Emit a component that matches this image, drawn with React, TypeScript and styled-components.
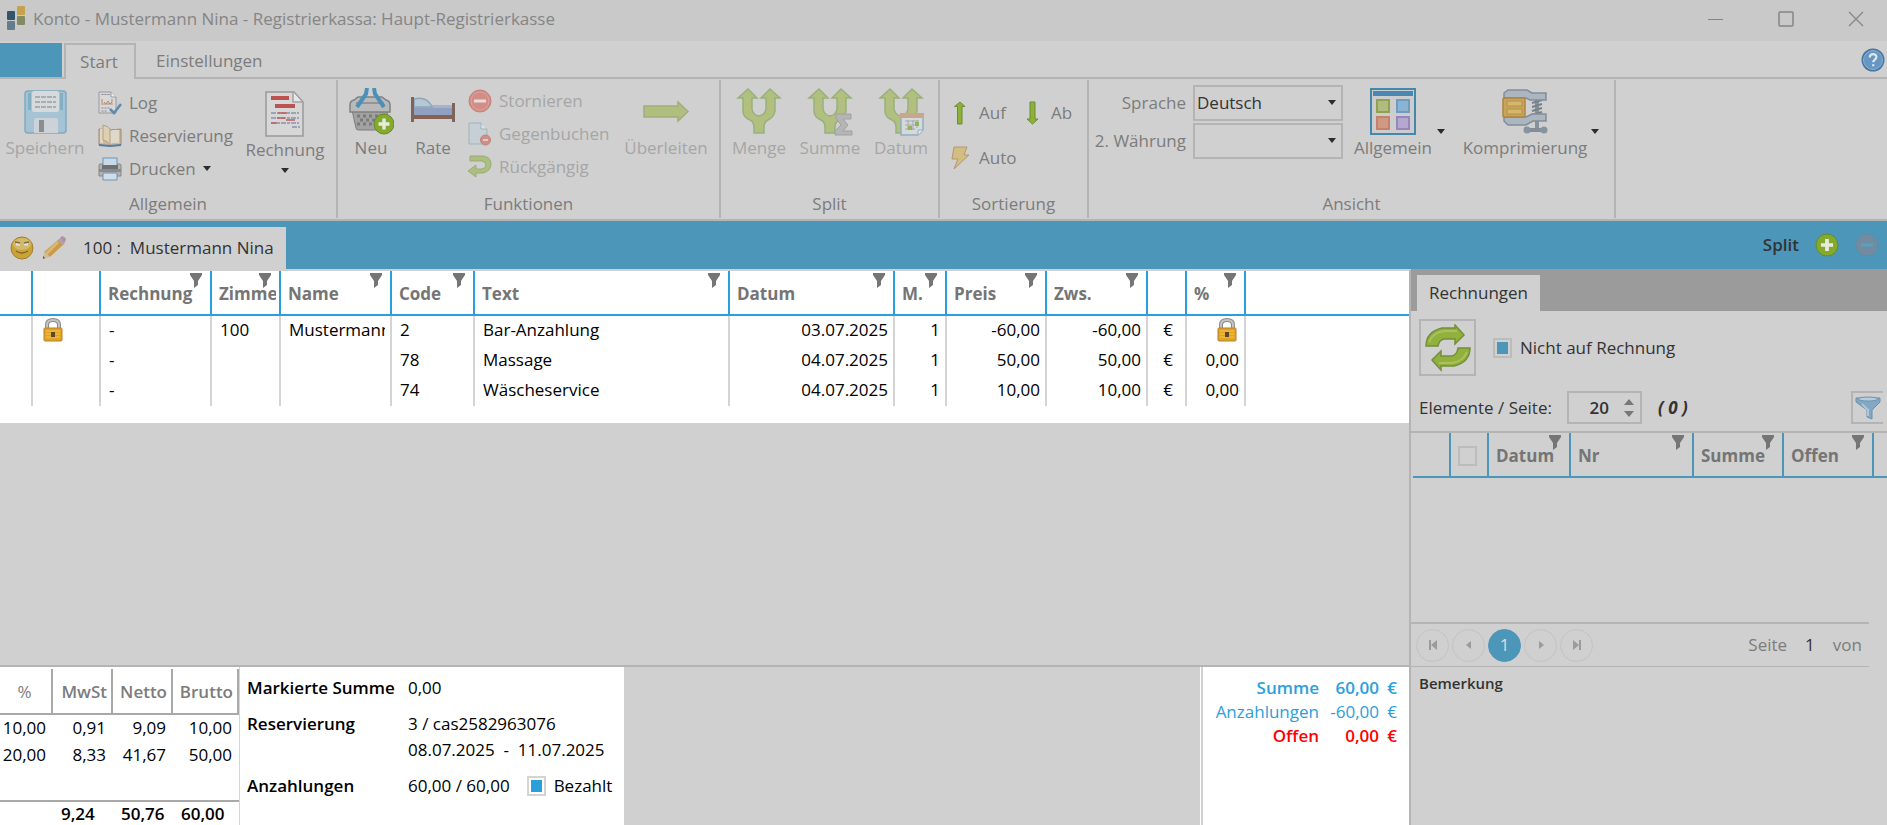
import React from "react";
import styled, { createGlobalStyle, css } from "styled-components";

const c = {
  bar: "#c9c9c9",
  panel: "#d0d0d0",
  line: "#b4b4b4",
  blue: "#4c96ba",
  bright: "#29a0dc",
  muted: "#7c7c7c",
  disabled: "#a6a6a6",
  ink: "#333333",
};

const Global = createGlobalStyle`
  *, *::before, *::after { box-sizing: border-box; }
  html, body, #root { height: 100%; }
  body { margin: 0; background: ${c.panel}; font-family: "Open Sans", "Noto Sans", sans-serif; font-size: 17px; line-height: 24px; }
  button, input, select { font: inherit; color: inherit; margin: 0; }
  button { border: 0; padding: 0; background: none; }
  svg { display: block; flex: none; }
`;

const Page = styled.div`
  display: flex;
  flex-direction: column;
  min-height: 100vh;
  color: ${c.ink};
`;

/* ---------- title bar and ribbon tabs ---------- */

const TitleBar = styled.header`
  display: flex;
  align-items: center;
  height: 41px;
  padding: 0 0 4px 7px;
  background: ${c.bar};
  color: ${c.muted};
`;

const Title = styled.h1`
  flex: 1;
  margin: 0 0 0 7px;
  font-size: 17px;
  font-weight: 400;
  color: #858585;
`;

const WindowButtons = styled.div`
  display: flex;
  gap: 8px;
`;

const WindowButton = styled.button`
  display: flex;
  align-items: center;
  justify-content: center;
  width: 62px;
  height: 36px;
`;

const TabRow = styled.nav`
  display: flex;
  align-items: stretch;
  height: 38px;
  padding-top: 2px;
  border-bottom: 2px solid ${c.line};
`;

const FileTab = styled.button`
  width: 62px;
  background: ${c.blue};
`;

const RibbonTab = styled.button<{ $active?: boolean }>`
  color: ${c.muted};
  padding: 2px 20px 0;
  ${(p) =>
    p.$active &&
    css`
      width: 72px;
      margin: 0 0 -2px 2px;
      padding: 0 2px 0 0;
      border: 2px solid ${c.line};
      border-bottom: 0;
      background: ${c.panel};
    `}
`;

const HelpButton = styled.button`
  margin-left: auto;
  padding: 0 2px 0 0;
`;

/* ---------- ribbon ---------- */

const RibbonBar = styled.div`
  display: flex;
  height: 142px;
  padding: 1px 0;
  border-bottom: 2px solid ${c.line};
  color: ${c.muted};
`;

const Group = styled.section<{ $w: number }>`
  display: flex;
  flex-direction: column;
  flex: none;
  width: ${(p) => p.$w}px;
  border-right: 2px solid ${c.line};
`;

const GroupBody = styled.div<{ $gap?: number; $pad?: number }>`
  display: flex;
  flex: 1;
  gap: ${(p) => p.$gap ?? 8}px;
  padding-left: ${(p) => p.$pad ?? 0}px;
`;

const GroupLabel = styled.h2`
  margin: 0;
  height: 26px;
  font-size: 17px;
  font-weight: 400;
  text-align: center;
`;

const BigButton = styled.button<{ $w: number; $top?: number }>`
  display: flex;
  flex-direction: column;
  align-items: center;
  width: ${(p) => p.$w}px;
  padding-top: ${(p) => p.$top ?? 8}px;
  white-space: nowrap;
  &:disabled {
    color: ${c.disabled};
  }
`;

const MenuButton = styled.button`
  display: flex;
  align-items: flex-start;
  & + & {
    margin-left: 8px;
  }
`;

const MenuFace = styled.span<{ $w: number }>`
  display: flex;
  flex-direction: column;
  align-items: center;
  width: ${(p) => p.$w}px;
  padding-top: 8px;
`;

const SideArrow = styled.span`
  padding: 49px 0 0 2px;
`;

const BelowArrow = styled.span`
  padding-top: 6px;
`;

const SmallList = styled.div<{ $w: number; $top: number }>`
  display: flex;
  flex-direction: column;
  width: ${(p) => p.$w}px;
  padding-top: ${(p) => p.$top}px;
`;

const SmallButton = styled.button`
  display: flex;
  align-items: center;
  gap: 7px;
  height: 33px;
  white-space: nowrap;
  &:disabled {
    color: ${c.disabled};
  }
`;

const SortGrid = styled.div`
  display: grid;
  grid-template-columns: 72px 60px;
  grid-auto-rows: 45px;
  padding-top: 10px;
`;

const SortButton = styled(SmallButton)`
  height: 45px;
`;

const FormGrid = styled.div`
  display: grid;
  grid-template-columns: 97px 150px;
  grid-template-rows: 36px 36px;
  gap: 2px 7px;
  padding-top: 5px;
  align-items: center;
`;

const FormLabel = styled.label`
  text-align: right;
`;

const SelectBox = styled.div`
  position: relative;
  svg {
    position: absolute;
    right: 7px;
    top: 15px;
    pointer-events: none;
  }
`;

const Select = styled.select`
  appearance: none;
  width: 100%;
  height: 36px;
  padding: 0 2px;
  border: 2px solid ${c.line};
  border-radius: 0;
  background: ${c.panel};
  color: ${c.ink};
`;

/* ---------- account band ---------- */

const Band = styled.div`
  display: flex;
  align-items: flex-end;
  justify-content: space-between;
  height: 48px;
  background: ${c.blue};
`;

const AccountTab = styled.div`
  display: flex;
  align-items: center;
  gap: 8px;
  width: 286px;
  height: 42px;
  padding-left: 10px;
  background: ${c.panel};
  white-space: pre;
  button:last-of-type {
    margin-right: 9px;
  }
`;

const SplitTools = styled.div`
  display: flex;
  align-items: center;
  height: 48px;
  padding-right: 8px;
  gap: 16px;
  font-weight: 600;
`;

/* ---------- workspace ---------- */

const Workspace = styled.div`
  display: flex;
  flex: 1;
`;

const Left = styled.main`
  display: flex;
  flex-direction: column;
  flex: 1;
  min-width: 0;
  border-top: 2px solid ${c.panel};
  border-right: 2px solid ${c.line};
`;

const GridArea = styled.div`
  flex: 1;
`;

const BookingWrap = styled.div`
  padding-bottom: 17px;
  background: #fff;
  color: #000;
`;

const DataTable = styled.table`
  width: 100%;
  table-layout: fixed;
  border-collapse: separate;
  border-spacing: 0;
`;

const Th = styled.th<{ $line: string }>`
  position: relative;
  height: 45px;
  padding: 2px 3px 0 7px;
  border-right: 2px solid ${(p) => p.$line};
  border-bottom: 2px solid ${(p) => p.$line};
  color: #757575;
  font-weight: 700;
  text-align: left;
  &:last-child {
    border-right: 0;
  }
`;

const Clip = styled.div`
  overflow: hidden;
  white-space: nowrap;
`;

const FilterMark = styled.svg`
  position: absolute;
  top: 2px;
  right: 8px;
`;

const Td = styled.td<{ $align?: "right" | "center" }>`
  height: 30px;
  padding: 0 5px 2px 8px;
  border-right: 2px solid #d4d4d4;
  text-align: ${(p) => p.$align ?? "left"};
  &:last-child {
    border-right: 0;
  }
`;

const LockSlot = styled.div<{ $end?: boolean }>`
  display: flex;
  justify-content: ${(p) => (p.$end ? "flex-end" : "flex-start")};
  padding: 0 2px;
`;

/* ---------- bottom summary ---------- */

const Summary = styled.div`
  display: flex;
  height: 160px;
  border-top: 2px solid ${c.line};
  color: #000;
`;

const TaxBox = styled.div`
  display: flex;
  width: 240px;
  padding-top: 2px;
  background: #fff;
  border-right: 1px solid #d4d4d4;
`;

const TaxTable = styled.table`
  width: 239px;
  height: 156px;
  table-layout: fixed;
  border-collapse: separate;
  border-spacing: 0;
  th {
    height: 46px;
    padding: 2px 4px 0 0;
    border-right: 2px solid #a9a9a9;
    border-bottom: 2px solid #a9a9a9;
    color: ${c.muted};
    font-weight: 600;
    text-align: right;
  }
  th:first-child {
    padding: 2px 2px 0 0;
    font-weight: 400;
    text-align: center;
  }
  tbody td {
    height: 27px;
    padding: 0 7px 2px 0;
    text-align: right;
  }
  tbody tr:last-child td {
    height: 58px;
    padding-bottom: 32px;
  }
  tfoot td {
    padding: 0 0 2px 8px;
    border-top: 2px solid #a9a9a9;
    font-weight: 600;
  }
`;

const StayBox = styled.dl`
  display: grid;
  grid-template-columns: 161px 1fr;
  grid-template-rows: 36px 36px 26px 36px;
  align-content: start;
  width: 384px;
  margin: 0;
  padding: 3px 0 0 7px;
  background: #fff;
  line-height: 36px;
  dt {
    font-weight: 600;
    white-space: nowrap;
  }
  dd {
    margin: 0;
    white-space: pre;
  }
`;

const StayDates = styled.dd`
  grid-column: 2;
  line-height: 16px;
`;

const PaidCell = styled.dd`
  display: flex;
  align-items: center;
  gap: 17px;
`;

const TotalBox = styled.div`
  width: 208px;
  margin-left: auto;
  padding: 9px 12px 0 0;
  background: #fff;
  border-left: 2px solid ${c.panel};
  box-shadow: -1px 0 #fff;
`;

const TotalTable = styled.table`
  width: 100%;
  border-collapse: collapse;
  td,
  th {
    height: 24px;
    padding: 0;
    font-weight: inherit;
    text-align: right;
  }
  td:nth-child(2) {
    width: 60px;
  }
  td:last-child {
    width: 18px;
  }
`;

const TotalRow = styled.tr<{ $color: string; $strong?: boolean }>`
  color: ${(p) => p.$color};
  font-weight: ${(p) => (p.$strong ? 600 : 400)};
`;

/* ---------- invoice side panel ---------- */

const Side = styled.aside`
  display: flex;
  flex-direction: column;
  flex: none;
  width: 476px;
`;

const SideTabs = styled.div`
  display: flex;
  align-items: flex-end;
  height: 42px;
  padding-left: 6px;
  background: #9b9b9b;
`;

const SideTab = styled.button`
  width: 123px;
  height: 36px;
  background: ${c.panel};
`;

const RefreshRow = styled.div`
  display: flex;
  align-items: center;
  gap: 17px;
  padding: 8px 8px 0;
`;

const RefreshButton = styled.button`
  display: flex;
  align-items: center;
  justify-content: center;
  width: 57px;
  height: 57px;
  border: 2px solid ${c.line};
`;

const CheckLabel = styled.label`
  display: flex;
  align-items: center;
  gap: 8px;
`;

const Check = styled.input<{ $fill?: string }>`
  appearance: none;
  display: block;
  flex: none;
  width: 19px;
  height: 20px;
  border: 2px solid ${(p) => (p.$fill === c.bright ? "#d4d4d4" : "#bcbcbc")};
  padding: 2px;
  &:checked {
    background: ${(p) => p.$fill} content-box;
  }
`;

const PagingRow = styled.div`
  display: flex;
  align-items: center;
  height: 57px;
  padding: 8px 4px 0 8px;
  border-bottom: 2px solid ${c.line};
`;

const SpinLabel = styled.label`
  width: 148px;
`;

const SpinBox = styled.div`
  display: flex;
  align-items: center;
  width: 75px;
  height: 33px;
  border: 2px solid ${c.line};
`;

const SpinInput = styled.input`
  width: 52px;
  padding: 0 12px 0 0;
  border: 0;
  background: none;
  font-weight: 600;
  text-align: right;
  appearance: textfield;
  &::-webkit-inner-spin-button {
    appearance: none;
  }
`;

const SpinArrows = styled.div`
  display: flex;
  flex-direction: column;
  gap: 6px;
  padding-left: 3px;
`;

const Count = styled.em`
  margin-left: 16px;
  font-weight: 700;
`;

const FilterButton = styled.button`
  display: flex;
  align-items: center;
  justify-content: center;
  width: 32px;
  height: 33px;
  margin-left: auto;
  border: 2px solid ${c.line};
  border-right: 0;
`;

const InvoiceArea = styled.div`
  flex: 1;
  padding-left: 2px;
`;

const Pager = styled.div`
  display: flex;
  align-items: center;
  gap: 3px;
  height: 45px;
  margin-right: 18px;
  padding: 0 7px 0 5px;
  border-top: 2px solid ${c.line};
  border-bottom: 1px solid ${c.line};
  color: ${c.muted};
`;

const PageButton = styled.button<{ $current?: boolean }>`
  display: flex;
  align-items: center;
  justify-content: center;
  width: 33px;
  height: 33px;
  border: 1px solid #c3c3c3;
  border-radius: 50%;
  ${(p) =>
    p.$current &&
    css`
      border-color: ${c.blue};
      background: ${c.blue};
      color: #dedede;
    `}
`;

const PageInfo = styled.div`
  display: flex;
  gap: 18px;
  margin-left: auto;
  b {
    color: ${c.ink};
    font-weight: 400;
  }
`;

const Remark = styled.h3`
  height: 158px;
  margin: 0;
  padding: 4px 8px;
  font-size: 15px;
  font-weight: 600;
`;

/* ---------- drawings ---------- */

const Caret = () => (
  <svg width="8" height="5" viewBox="0 0 8 5">
    <path d="M0 0h8L4 5z" fill="#2c2c2c" />
  </svg>
);

const Logo = () => (
  <svg width="19" height="25" viewBox="0 0 19 25">
    <rect x="0" y="5" width="8" height="9" rx="1" fill="#34556b" />
    <rect x="10" y="0" width="8" height="9" rx="1" fill="#c5a24e" />
    <rect x="10" y="10" width="8" height="9" rx="1" fill="#838c61" />
    <rect x="0" y="15" width="8" height="9" rx="1" fill="#637c8e" />
  </svg>
);

const HelpIcon = () => (
  <svg width="24" height="24" viewBox="0 0 24 24">
    <circle cx="12" cy="12" r="11.5" fill="#4674a5" />
    <circle cx="12" cy="12" r="9.5" fill="#6597c0" stroke="#8fb3cf" />
    <path d="M8.8 9.4c0-4.4 6.6-4.2 6.6-.4 0 2.500-3.200 2.600-3.200 5.200M12.200 16.200v2" fill="none" stroke="#dfe6ec" strokeWidth="2.200" />
  </svg>
);

const FloppyIcon = () => (
  <svg width="46" height="48" viewBox="0 0 46 48">
    <rect x="3" y="3" width="41" height="42" rx="3" fill="#a5c3d3" stroke="#7eabc3" strokeWidth="1.500" />
    <path d="M6 5h3v17H6zM38 5h3v17h-3z" fill="#83afc6" />
    <rect x="10" y="3" width="27" height="21" rx="2" fill="#d7dadd" />
    <path d="M13 9h21M13 14h21M13 19h21" stroke="#a9adb2" strokeWidth="2" strokeDasharray="5 1" />
    <path d="M12 45V32q0-2 2-2h20q2 0 2 2v13z" fill="#ccd2d7" />
    <rect x="17" y="32" width="5" height="12" fill="#8b8e90" />
  </svg>
);

const LogIcon = () => (
  <svg width="24" height="24" viewBox="0 0 24 24">
    <path d="M1 1h12l5 5v16H1z" fill="#d8d8d8" stroke="#9a9a9a" />
    <path d="M13 1v5h5" fill="#eee" stroke="#9a9a9a" />
    <path d="M3.500 3.500h8M3.500 17h9M3.500 20h6" stroke="#7f8796" strokeDasharray="2 1" />
    <path d="M4 8v6M5 13h10M6 11l2 2 2-3 2 3 2-2v-3" stroke="#b98a6c" fill="none" />
    <path d="M12 18l4 4 7-9" fill="none" stroke="#6489ae" strokeWidth="2.600" />
  </svg>
);

const BookIcon = () => (
  <svg width="24" height="24" viewBox="0 0 24 24">
    <path d="M1 5l10 1 12-1v16l-11 1-11-1z" fill="#c9b99a" stroke="#9c8a6e" />
    <path d="M1 21l11 1 11-1" fill="none" stroke="#557da6" strokeWidth="2" />
    <path d="M2 5h3v14H2z" fill="#e0d6c2" />
    <path d="M12 7q4-2 9-1v13q-5-1-9 1z" fill="#dfd8c8" />
    <path d="M5 1q5 1 7 4v16q-2-4-7-5z" fill="#dccfb4" stroke="#b5a17c" />
  </svg>
);

const PrinterIcon = () => (
  <svg width="24" height="24" viewBox="0 0 24 24">
    <path d="M1 8q0-1 2-1h18q2 0 2 1v11H1z" fill="#b3b3b3" stroke="#858585" />
    <rect x="5" y="1" width="14" height="8" fill="#c8dae8" stroke="#6c93b5" />
    <rect x="4" y="8" width="16" height="7" fill="#707070" />
    <rect x="1" y="12" width="22" height="3" fill="#8b8b8b" />
    <path d="M5 16h14v7H5z" fill="#cfdee9" stroke="#6c93b5" />
  </svg>
);

const InvoiceIcon = () => (
  <svg width="46" height="48" viewBox="0 0 46 48">
    <path d="M4 2h28l9 10v34H4z" fill="#d7d7d7" stroke="#999" strokeWidth="1.500" />
    <path d="M31 2v10h9" fill="#e6e6e6" stroke="#a3a3a3" strokeWidth="1.500" />
    <path d="M9 8h18M13 16h20" stroke="#bd5350" strokeWidth="4" />
    <path d="M9 23h28M9 28h28M9 33h28M30 37h8" stroke="#8795ad" strokeWidth="1.500" strokeDasharray="5 1 3 1" />
    <path d="M16 23h9M15 28h8M24 30h9M9 33h6" stroke="#bd625f" strokeWidth="1.500" />
  </svg>
);

const Plus = ({ cx, cy, r }: { cx: number; cy: number; r: number }) => (
  <g>
    <circle cx={cx} cy={cy} r={r} fill="#83a92d" stroke="#668b2e" />
    <path d={`M${cx - r * 0.55} ${cy}h${r * 1.1}M${cx} ${cy - r * 0.55}v${r * 1.1}`} stroke="#e7ebdf" strokeWidth={r * 0.34} />
  </g>
);

const BasketIcon = () => (
  <svg width="46" height="48" viewBox="0 0 46 48">
    <path d="M4 22h36l-4 18q0 2-3 2H11q-3 0-3-2z" fill="#a2a2a2" stroke="#7c7c7c" />
    <path d="M2 17q0-4 4-5l4-3h24l4 3q4 1 4 5v7H2z" fill="#b9b9b9" stroke="#808080" strokeWidth="1.500" />
    <path d="M8 15h28" stroke="#959595" strokeWidth="2" />
    <path d="M9 28h25M9 36h25" stroke="#7b7b7b" strokeWidth="3" strokeDasharray="3 3" />
    <path d="M12 32h22" stroke="#7b7b7b" strokeWidth="3" strokeDasharray="3 3" />
    <path d="M19 0l-1 6-9 13M26 0l1 6 9 13" fill="none" stroke="#4b90b9" strokeWidth="4" />
    <Plus cx={36} cy={36} r={10} />
  </svg>
);

const BedIcon = () => (
  <svg width="46" height="48" viewBox="0 0 46 48">
    <path d="M4 18h38v9H4z" fill="#8fa0c0" />
    <path d="M4 17h38v3H4z" fill="#a6b3cb" />
    <path d="M4 11q13-3 18 8H4z" fill="#b6c8d4" stroke="#8ba5b9" strokeWidth="1.500" />
    <path d="M2 27h42v4H2z" fill="#856156" />
    <path d="M1 9h3v25H1zM42 15h3v19h-3z" fill="#7d655b" />
  </svg>
);

const CancelIcon = () => (
  <svg width="24" height="24" viewBox="0 0 24 24">
    <circle cx="12" cy="12" r="11" fill="#d18d86" stroke="#c5827c" />
    <circle cx="12" cy="12" r="9" fill="none" stroke="#dba39c" />
    <path d="M6 12h12" stroke="#e4dddb" strokeWidth="3" />
  </svg>
);

const CounterIcon = () => (
  <svg width="24" height="24" viewBox="0 0 24 24">
    <path d="M1 1h12l6 6v15H1z" fill="#c6cfd3" stroke="#9db5c1" />
    <path d="M13 1v6h6" fill="#dce2e5" stroke="#9db5c1" />
    <circle cx="17.500" cy="18" r="5" fill="#cc8f8a" stroke="#c37f79" />
    <path d="M15 18h5" stroke="#e4dddb" strokeWidth="1.500" />
  </svg>
);

const UndoIcon = () => (
  <svg width="24" height="24" viewBox="0 0 24 24">
    <path d="M2 1h13q8 1 8 8t-8 9H8v4L0 16l8-6v4h6q4-1 4-4t-4-4H2z" fill="#adbf7e" stroke="#98ac76" />
  </svg>
);

const TransferIcon = () => (
  <svg width="46" height="48" viewBox="0 0 46 48">
    <path d="M1 18h34v-4l10 9.500-10 9.500v-4H1z" fill="#b1be7f" stroke="#9bb07b" strokeWidth="1.500" />
  </svg>
);

const ForkShape = () => (
  <path
    d="M12 1l9 9h-5v11q1 6 7 7 6-1 7-7V10h-5l9-9 10 9h-5v13q-1 6-7 9-4 2-4 7v6H18v-6q0-5-4-7-7-3-7-9V10H2z"
    fill="#b1c07f"
    stroke="#99b07e"
    strokeWidth="1.500"
  />
);

const ForkIcon = ({ mark }: { mark?: "sum" | "date" }) => (
  <svg width="46" height="48" viewBox="0 0 46 48">
    <ForkShape />
    {mark === "sum" && (
      <path d="M29 26h15v5h-8l5 6-5 6h9v4H28v-4l6-6-5-7z" fill="#b5b5b5" stroke="#a0a0a0" />
    )}
    {mark === "date" && (
      <g>
        <path d="M23 28h22v14l-5 5H23z" fill="#d4d9dc" stroke="#8fb0c3" strokeWidth="1.500" />
        <path d="M22 25h24v5H22z" fill="#c9a78f" />
        <path d="M27 33h14M27 37h14M27 41h10M30 32v10M35 32v10M39 32v8" stroke="#a9a9a9" />
        <path d="M30 38h4v4h-4zM37 34h4v4h-4z" fill="#93b25a" />
        <path d="M40 47v-5h5" fill="#e4e4e4" stroke="#8fb0c3" />
      </g>
    )}
  </svg>
);

const SortArrow = ({ down }: { down?: boolean }) => (
  <svg width="24" height="24" viewBox="0 0 24 24">
    <path
      d={down ? "M10 1h5v17h3l-5.500 5L7 18h3z" : "M12 1l5 4.500h-3V23H9.500V5.500h-3z"}
      fill="#8db137"
      stroke="#6b8d34"
    />
  </svg>
);

const BoltIcon = () => (
  <svg width="24" height="24" viewBox="0 0 24 24">
    <path d="M6 1h13l-3 8h5L6 23l4-10H4z" fill="#d1be80" stroke="#b6976f" />
  </svg>
);

const TilesIcon = () => (
  <svg width="46" height="48" viewBox="0 0 46 48">
    <rect x="1" y="1" width="44" height="45" fill="#cdcdcd" stroke="#4389ae" strokeWidth="2" />
    <path d="M3 3h40v5H3z" fill="#4a87b2" />
    <rect x="7" y="12" width="12" height="12" fill="#b0bb80" stroke="#8ea352" strokeWidth="2" />
    <rect x="27" y="12" width="12" height="12" fill="#8bb3d3" stroke="#6e9cc0" strokeWidth="2" />
    <rect x="7" y="29" width="12" height="12" fill="#cf9a82" stroke="#c6806b" strokeWidth="2" />
    <rect x="27" y="29" width="12" height="12" fill="#b5a8cf" stroke="#9686bd" strokeWidth="2" />
  </svg>
);

const ClampIcon = () => (
  <svg width="46" height="48" viewBox="0 0 46 48">
    <path d="M35 9v32" stroke="#87919a" strokeWidth="4" />
    <path d="M30 15l10-3M30 19l10-3M30 23l10-3M30 27l10-3" stroke="#77818b" strokeWidth="2" />
    <path d="M2 5l4-3h19l5 3h14v7H28l-4-2H2z" fill="#abb6c0" stroke="#828d98" strokeWidth="1.500" />
    <path d="M2 29h22l6-3h14v7H31l-7 4H6l-4-4z" fill="#abb6c0" stroke="#828d98" strokeWidth="1.500" />
    <rect x="1" y="10" width="22" height="19" rx="1" fill="#c9a55c" stroke="#ad8442" strokeWidth="1.500" />
    <rect x="5" y="13" width="15" height="5" fill="#d3b76c" stroke="#b78f45" />
    <rect x="5" y="21" width="15" height="5" fill="#d3b76c" stroke="#b78f45" />
    <path d="M25 42h19" stroke="#828d98" strokeWidth="4" />
    <circle cx="25" cy="42" r="3.500" fill="#8794a0" />
    <circle cx="42" cy="42" r="3.500" fill="#8794a0" />
  </svg>
);

const SmileyIcon = () => (
  <svg width="24" height="24" viewBox="0 0 24 24">
    <circle cx="12" cy="12" r="11" fill="#c9a336" stroke="#a37e31" />
    <ellipse cx="12" cy="8" rx="9" ry="6" fill="#d3ba6a" />
    <path d="M6 8h4M14 8h4" stroke="#e2e2e2" strokeWidth="3" />
    <path d="M5 6l5 1M14 7l5-1" stroke="#7d6a3c" strokeWidth="1.500" />
    <path d="M6 15q6 4 12 0" fill="none" stroke="#80652a" strokeWidth="1.500" />
  </svg>
);

const PencilIcon = () => (
  <svg width="24" height="24" viewBox="0 0 24 24">
    <path d="M17 3l5 5L8 21l-6-5z" fill="#cc9a4b" />
    <path d="M15 5l2 2L5 19l-2-2z" fill="#d9b972" />
    <path d="M2 16l6 5-7 2z" fill="#cfbd9f" />
    <path d="M1 20l2 2-2 1z" fill="#555" />
    <path d="M16 4l2-2 5 5-2 2z" fill="#a9a9a9" />
    <path d="M18 2l2-2q4 1 4 4l-2 3z" fill="#b48fac" />
  </svg>
);

const RoundPlus = () => (
  <svg width="24" height="24" viewBox="0 0 24 24">
    <Plus cx={12} cy={12} r={11} />
  </svg>
);

const RoundMinus = () => (
  <svg width="24" height="24" viewBox="0 0 24 24">
    <circle cx="12" cy="12" r="11" fill="#718c9f" stroke="#668ba3" />
    <path d="M6 12h12" stroke="#5b9fc2" strokeWidth="3" />
  </svg>
);

const LockIcon = () => (
  <svg width="20" height="24" viewBox="0 0 20 24">
    <path d="M4 11V7q0-5 6-5t6 5v4" fill="none" stroke="#8b8b8b" strokeWidth="4" />
    <path d="M4 11V7q0-5 6-5t6 5v4" fill="none" stroke="#c5c5c5" strokeWidth="2" />
    <rect x="1" y="10" width="18" height="13" rx="1" fill="#e2a325" stroke="#b98029" />
    <path d="M3 13h14M3 16h14M3 19h14" stroke="#f3c850" />
    <path d="M8 14h4v5H8z" fill="#5b4820" />
  </svg>
);

const RefreshIcon = () => (
  <svg width="48" height="48" viewBox="0 0 48 48">
    <path d="M2 22q0-14 16-18h13V1l9 10-9 9v-5H20q-5 1-6 7z" fill="#92b13c" stroke="#728f3a" strokeWidth="1.500" />
    <path d="M46 24q0 14-16 18H17v4L8 36l9-9v5h11q5-1 6-8z" fill="#92b13c" stroke="#728f3a" strokeWidth="1.500" />
    <path d="M5 18q4-10 16-11h12M43 28q-4 10-16 11H15" fill="none" stroke="#a9c25e" strokeWidth="2" />
  </svg>
);

const FunnelIcon = () => (
  <svg width="26" height="26" viewBox="0 0 26 26">
    <path d="M1 3h24v4l-8 8v9l-5-2v-7L1 7z" fill="#83a8c4" stroke="#6a91ae" />
    <ellipse cx="13" cy="4" rx="10" ry="2" fill="#b9ccd9" stroke="#6d95b2" />
    <path d="M7 9l6 6v6" fill="none" stroke="#aec6d8" strokeWidth="2" />
  </svg>
);

const Filter = () => (
  <FilterMark width="12" height="15" viewBox="0 0 12 15">
    <path d="M0 0h12v2L8 8v4l-4 3V8L0 2z" fill="#757575" />
  </FilterMark>
);

const PageGlyph = ({ d }: { d: string }) => (
  <svg width="10" height="10" viewBox="0 0 10 10">
    <path d={d} fill="#9b9b9b" />
  </svg>
);

/* ---------- data ---------- */

const bookingColumns: { title: string; width: number; filter?: boolean }[] = [
  { title: "", width: 33 },
  { title: "", width: 68 },
  { title: "Rechnung", width: 111, filter: true },
  { title: "Zimmer", width: 69, filter: true },
  { title: "Name", width: 111, filter: true },
  { title: "Code", width: 83, filter: true },
  { title: "Text", width: 255, filter: true },
  { title: "Datum", width: 165, filter: true },
  { title: "M.", width: 52, filter: true },
  { title: "Preis", width: 100, filter: true },
  { title: "Zws.", width: 101, filter: true },
  { title: "", width: 39 },
  { title: "%", width: 59, filter: true },
];

const bookings = [
  { locked: true, room: "100", name: "Mustermann", code: "2", text: "Bar-Anzahlung", date: "03.07.2025", price: "-60,00" },
  { locked: false, room: "", name: "", code: "78", text: "Massage", date: "04.07.2025", price: "50,00" },
  { locked: false, room: "", name: "", code: "74", text: "Wäscheservice", date: "04.07.2025", price: "10,00" },
];

const invoiceColumns = [
  { title: "Datum", width: 82 },
  { title: "Nr", width: 123 },
  { title: "Summe", width: 90 },
  { title: "Offen", width: 90 },
];

const taxes = [
  ["10,00", "0,91", "9,09", "10,00"],
  ["20,00", "8,33", "41,67", "50,00"],
];

/* ---------- sections ---------- */

const Ribbon = () => (
  <RibbonBar>
    <Group $w={338}>
      <GroupBody>
        <BigButton $w={90} disabled><FloppyIcon />Speichern</BigButton>
        <SmallList $w={142} $top={6}>
          <SmallButton><LogIcon />Log</SmallButton>
          <SmallButton><BookIcon />Reservierung</SmallButton>
          <SmallButton><PrinterIcon />Drucken<Caret /></SmallButton>
        </SmallList>
        <BigButton $w={74} $top={10}>
          <InvoiceIcon />Rechnung
          <BelowArrow><Caret /></BelowArrow>
        </BigButton>
      </GroupBody>
      <GroupLabel>Allgemein</GroupLabel>
    </Group>
    <Group $w={383}>
      <GroupBody $pad={6}>
        <BigButton $w={54}><BasketIcon />Neu</BigButton>
        <BigButton $w={54}><BedIcon />Rate</BigButton>
        <SmallList $w={145} $top={4}>
          <SmallButton disabled><CancelIcon />Stornieren</SmallButton>
          <SmallButton disabled><CounterIcon />Gegenbuchen</SmallButton>
          <SmallButton disabled><UndoIcon />Rückgängig</SmallButton>
        </SmallList>
        <BigButton $w={90} disabled><TransferIcon />Überleiten</BigButton>
      </GroupBody>
      <GroupLabel>Funktionen</GroupLabel>
    </Group>
    <Group $w={219}>
      <GroupBody $pad={6} $gap={7}>
        <BigButton $w={64} disabled><ForkIcon />Menge</BigButton>
        <BigButton $w={64} disabled><ForkIcon mark="sum" />Summe</BigButton>
        <BigButton $w={64} disabled><ForkIcon mark="date" />Datum</BigButton>
      </GroupBody>
      <GroupLabel>Split</GroupLabel>
    </Group>
    <Group $w={149}>
      <GroupBody $pad={8}>
        <SortGrid>
          <SortButton><SortArrow />Auf</SortButton>
          <SortButton><SortArrow down />Ab</SortButton>
          <SortButton><BoltIcon />Auto</SortButton>
        </SortGrid>
      </GroupBody>
      <GroupLabel>Sortierung</GroupLabel>
    </Group>
    <Group $w={527}>
      <GroupBody>
        <FormGrid>
          <FormLabel htmlFor="language">Sprache</FormLabel>
          <SelectBox>
            <Select id="language" defaultValue="Deutsch"><option>Deutsch</option></Select>
            <Caret />
          </SelectBox>
          <FormLabel htmlFor="currency">2. Währung</FormLabel>
          <SelectBox>
            <Select id="currency" defaultValue=""><option value="" /></Select>
            <Caret />
          </SelectBox>
        </FormGrid>
        <MenuButton>
          <MenuFace $w={84}><TilesIcon />Allgemein</MenuFace>
          <SideArrow><Caret /></SideArrow>
        </MenuButton>
        <MenuButton>
          <MenuFace $w={128}><ClampIcon />Komprimierung</MenuFace>
          <SideArrow><Caret /></SideArrow>
        </MenuButton>
      </GroupBody>
      <GroupLabel>Ansicht</GroupLabel>
    </Group>
  </RibbonBar>
);

const Bookings = () => (
  <BookingWrap>
    <DataTable>
      <colgroup>
        {bookingColumns.map((col, i) => <col key={i} width={col.width} />)}
        <col />
      </colgroup>
      <thead>
        <tr>
          {bookingColumns.map((col, i) => (
            <Th key={i} $line={c.bright}>
              <Clip>{col.title}</Clip>
              {col.filter && <Filter />}
            </Th>
          ))}
          <Th $line={c.bright} />
        </tr>
      </thead>
      <tbody>
        {bookings.map((b) => (
          <tr key={b.code}>
            <Td />
            <Td>{b.locked && <LockSlot><LockIcon /></LockSlot>}</Td>
            <Td>-</Td>
            <Td>{b.room}</Td>
            <Td><Clip>{b.name}</Clip></Td>
            <Td>{b.code}</Td>
            <Td>{b.text}</Td>
            <Td $align="right">{b.date}</Td>
            <Td $align="right">1</Td>
            <Td $align="right">{b.price}</Td>
            <Td $align="right">{b.price}</Td>
            <Td $align="center">€</Td>
            <Td $align="right">{b.locked ? <LockSlot $end><LockIcon /></LockSlot> : "0,00"}</Td>
            <Td />
          </tr>
        ))}
      </tbody>
    </DataTable>
  </BookingWrap>
);

const BottomSummary = () => (
  <Summary>
    <TaxBox>
      <TaxTable>
        <colgroup>
          <col width={53} />
          <col width={60} />
          <col width={60} />
          <col width={66} />
        </colgroup>
        <thead>
          <tr><th>%</th><th>MwSt</th><th>Netto</th><th>Brutto</th></tr>
        </thead>
        <tbody>
          {taxes.map((row) => (
            <tr key={row[0]}>{row.map((v, i) => <td key={i}>{v}</td>)}</tr>
          ))}
        </tbody>
        <tfoot>
          <tr><td /><td>9,24</td><td>50,76</td><td>60,00</td></tr>
        </tfoot>
      </TaxTable>
    </TaxBox>
    <StayBox>
      <dt>Markierte Summe</dt>
      <dd>0,00</dd>
      <dt>Reservierung</dt>
      <dd>3 / cas2582963076</dd>
      <StayDates>{"08.07.2025  -  11.07.2025"}</StayDates>
      <dt>Anzahlungen</dt>
      <PaidCell>
        60,00 / 60,00
        <CheckLabel><Check type="checkbox" defaultChecked $fill={c.bright} />Bezahlt</CheckLabel>
      </PaidCell>
    </StayBox>
    <TotalBox>
      <TotalTable>
        <tbody>
          <TotalRow $color={c.bright} $strong><th scope="row">Summe</th><td>60,00</td><td>€</td></TotalRow>
          <TotalRow $color={c.bright}><th scope="row">Anzahlungen</th><td>-60,00</td><td>€</td></TotalRow>
          <TotalRow $color="#ff0000" $strong><th scope="row">Offen</th><td>0,00</td><td>€</td></TotalRow>
        </tbody>
      </TotalTable>
    </TotalBox>
  </Summary>
);

const Invoices = () => (
  <Side>
    <SideTabs><SideTab>Rechnungen</SideTab></SideTabs>
    <RefreshRow>
      <RefreshButton aria-label="Aktualisieren"><RefreshIcon /></RefreshButton>
      <CheckLabel><Check type="checkbox" defaultChecked $fill={c.blue} />Nicht auf Rechnung</CheckLabel>
    </RefreshRow>
    <PagingRow>
      <SpinLabel htmlFor="per-page">Elemente / Seite:</SpinLabel>
      <SpinBox>
        <SpinInput id="per-page" type="number" defaultValue={20} />
        <SpinArrows>
          <button aria-label="Mehr"><svg width="10" height="6"><path d="M0 6h10L5 0z" fill="#777" /></svg></button>
          <button aria-label="Weniger"><svg width="10" height="6"><path d="M0 0h10L5 6z" fill="#777" /></svg></button>
        </SpinArrows>
      </SpinBox>
      <Count>( 0 )</Count>
      <FilterButton aria-label="Filter"><FunnelIcon /></FilterButton>
    </PagingRow>
    <InvoiceArea>
      <DataTable>
        <colgroup>
          <col width={38} />
          <col width={38} />
          {invoiceColumns.map((col) => <col key={col.title} width={col.width} />)}
          <col />
        </colgroup>
        <thead>
          <tr>
            <Th $line={c.blue} />
            <Th $line={c.blue}><Check type="checkbox" aria-label="Alle auswählen" /></Th>
            {invoiceColumns.map((col) => (
              <Th key={col.title} $line={c.blue}><Clip>{col.title}</Clip><Filter /></Th>
            ))}
            <Th $line={c.blue} />
          </tr>
        </thead>
      </DataTable>
    </InvoiceArea>
    <Pager>
      <PageButton aria-label="Erste Seite"><PageGlyph d="M1 0h2v10H1zM9 0v10L3 5z" /></PageButton>
      <PageButton aria-label="Vorige Seite"><PageGlyph d="M7 1v8L2 5z" /></PageButton>
      <PageButton $current>1</PageButton>
      <PageButton aria-label="Nächste Seite"><PageGlyph d="M3 1v8l5-4z" /></PageButton>
      <PageButton aria-label="Letzte Seite"><PageGlyph d="M7 0h2v10H7zM1 0v10l6-5z" /></PageButton>
      <PageInfo>Seite<b>1</b>von</PageInfo>
    </Pager>
    <Remark>Bemerkung</Remark>
  </Side>
);

export default function App() {
  return (
    <Page>
      <Global />
      <TitleBar>
        <Logo />
        <Title>Konto - Mustermann Nina - Registrierkassa: Haupt-Registrierkasse</Title>
        <WindowButtons>
          <WindowButton aria-label="Minimieren">
            <svg width="16" height="16"><path d="M0 8.500h15" stroke="#858585" /></svg>
          </WindowButton>
          <WindowButton aria-label="Maximieren">
            <svg width="16" height="16"><rect x="1" y="1" width="14" height="14" rx="1" fill="none" stroke="#858585" strokeWidth="1.500" /></svg>
          </WindowButton>
          <WindowButton aria-label="Schließen">
            <svg width="16" height="16"><path d="M1 1l14 14M15 1L1 15" stroke="#858585" strokeWidth="1.300" /></svg>
          </WindowButton>
        </WindowButtons>
      </TitleBar>
      <TabRow>
        <FileTab aria-label="Datei" />
        <RibbonTab $active>Start</RibbonTab>
        <RibbonTab>Einstellungen</RibbonTab>
        <HelpButton aria-label="Hilfe"><HelpIcon /></HelpButton>
      </TabRow>
      <Ribbon />
      <Band>
        <AccountTab>
          <button aria-label="Gast"><SmileyIcon /></button>
          <button aria-label="Bearbeiten"><PencilIcon /></button>
          {"100 :  Mustermann Nina"}
        </AccountTab>
        <SplitTools>
          Split
          <button aria-label="Split hinzufügen"><RoundPlus /></button>
          <button aria-label="Split entfernen" disabled><RoundMinus /></button>
        </SplitTools>
      </Band>
      <Workspace>
        <Left>
          <GridArea><Bookings /></GridArea>
          <BottomSummary />
        </Left>
        <Invoices />
      </Workspace>
    </Page>
  );
}
